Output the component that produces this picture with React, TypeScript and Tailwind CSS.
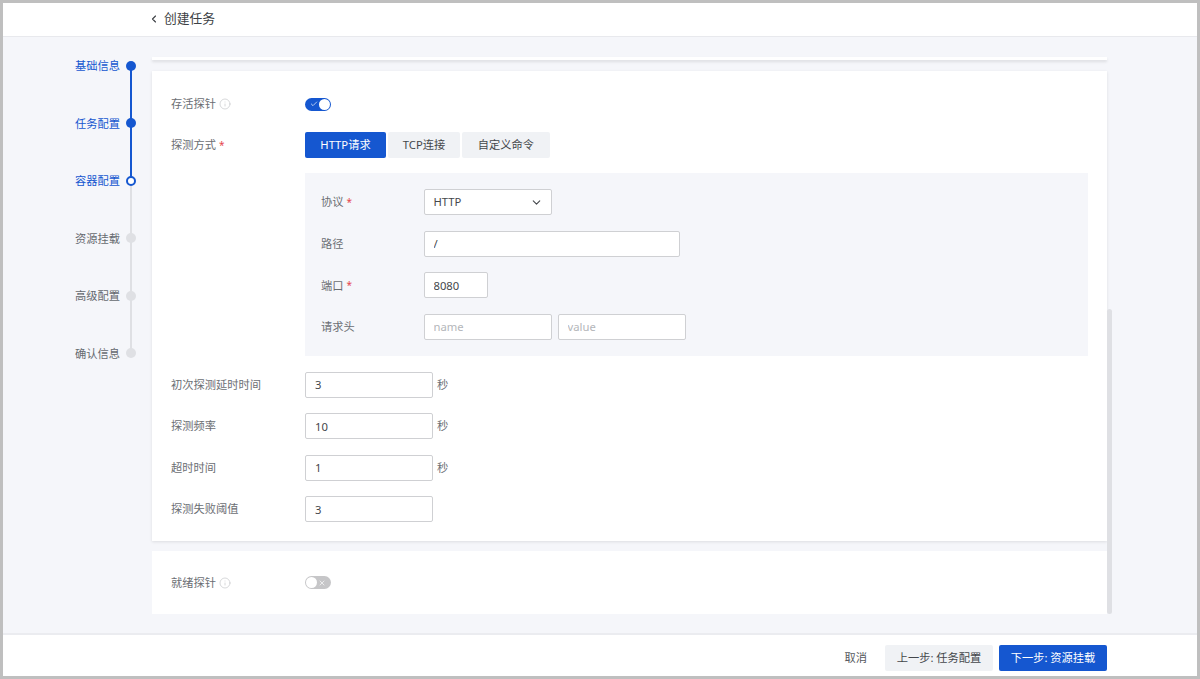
import { Check, ChevronDown, ChevronLeft, Info, X } from "lucide-react";

const steps = [
  { name: "基础信息", state: "done" },
  { name: "任务配置", state: "done" },
  { name: "容器配置", state: "current" },
  { name: "资源挂载", state: "todo" },
  { name: "高级配置", state: "todo" },
  { name: "确认信息", state: "todo" },
];

function Stepper() {
  return (
    <div className="w-[149px] shrink-0 pr-[16px]">
      {steps.map((step, i) => (
        <div key={step.name} className="relative flex h-[57.5px] items-center justify-end gap-[6px]">
          <span className={step.state === "todo" ? "text-[#666a70]" : "text-[#1557d0]"}>{step.name}</span>
          {i < steps.length - 1 && (
            <div
              className={`absolute right-[4px] top-1/2 h-full w-[2px] ${
                step.state === "done" ? "bg-[#1557d0]" : "bg-[#dfe0e4]"
              }`}
            />
          )}
          {step.state === "done" && <div className="relative h-[10px] w-[10px] rounded-full bg-[#1557d0]" />}
          {step.state === "current" && (
            <div className="relative h-[10px] w-[10px] rounded-full border-2 border-[#1557d0] bg-white" />
          )}
          {step.state === "todo" && <div className="relative h-[10px] w-[10px] rounded-full bg-[#dfe0e4]" />}
        </div>
      ))}
    </div>
  );
}

function Toggle({ on }: { on: boolean }) {
  if (on) {
    return (
      <div className="flex h-[13px] w-[26px] items-center justify-between rounded-full bg-[#1557d0] pl-[5px] pr-[1px]">
        <Check size={8} strokeWidth={2} className="text-white" />
        <div className="h-[11px] w-[11px] rounded-full bg-white" />
      </div>
    );
  }
  return (
    <div className="flex h-[13px] w-[26px] items-center justify-between rounded-full bg-[#c6c6c8] pl-[1px] pr-[5px]">
      <div className="h-[11px] w-[11px] rounded-full bg-white" />
      <X size={8} strokeWidth={2} className="text-white" />
    </div>
  );
}

function Label({ text, required, info }: { text: string; required?: boolean; info?: boolean }) {
  return (
    <div className="flex items-center text-[#6b6e73]">
      <span>{text}</span>
      {required && <span className="ml-[3px] text-[10px] text-[#e5484d]">*</span>}
      {info && <Info size={12} strokeWidth={1.5} className="ml-[3px] text-[#c9cbce]" />}
    </div>
  );
}

function Field({ value, placeholder, width }: { value?: string; placeholder?: string; width: string }) {
  return (
    <input
      readOnly
      value={value}
      placeholder={placeholder}
      className={`h-[26px] rounded-[2px] border border-[#cfd0d3] bg-white px-[9px] text-[#44474b] outline-none placeholder:text-[#b4b6ba] ${width}`}
    />
  );
}

function PanelRow({ label, required, children }: { label: string; required?: boolean; children: React.ReactNode }) {
  return (
    <div className="flex h-[26px] items-center">
      <div className="w-[102.5px]">
        <Label text={label} required={required} />
      </div>
      {children}
    </div>
  );
}

function NumberRow({ label, value, unit }: { label: string; value: string; unit?: boolean }) {
  return (
    <div className="flex h-[26px] items-center">
      <div className="w-[134px]">
        <Label text={label} />
      </div>
      <Field value={value} width="w-[128px]" />
      {unit && <span className="ml-[4px] text-[#6b6e73]">秒</span>}
    </div>
  );
}

export default function App() {
  return (
    <div
      className="flex h-[679px] w-[1200px] flex-col border-[3px] border-[#bfbfbf] bg-[#f5f6fa] text-[11.25px] leading-none"
      style={{ fontFamily: '"Noto Sans", "Noto Sans CJK SC", sans-serif' }}
    >
      <header className="flex h-[34px] shrink-0 items-center border-b border-[#e8e9ed] bg-white pb-[2px] pl-[145px] text-[12.75px] text-[#3c3f44]">
        <ChevronLeft size={12} strokeWidth={2.25} />
        <span className="ml-[4px]">创建任务</span>
      </header>

      <main className="relative flex min-h-0 flex-1">
        <Stepper />
        <div className="w-[955px]">
          <div className="mt-[20px] h-[3px] bg-white shadow-[0_2px_3px_rgba(0,0,0,0.1)]" />
          <section className="mt-[11px] flex h-[470px] flex-col bg-white pl-[19px] pr-[19px] pt-[20px] shadow-[0_1px_3px_rgba(0,0,0,0.1)]">
            <div className="flex h-[26px] items-center">
              <div className="w-[134px]">
                <Label text="存活探针" info />
              </div>
              <Toggle on />
            </div>

            <div className="mt-[15px] flex h-[26px] items-center">
              <div className="w-[134px]">
                <Label text="探测方式" required />
              </div>
              <div className="flex gap-[2px]">
                <button className="h-[26px] w-[81px] rounded-[2px] bg-[#1557d0] text-white">HTTP请求</button>
                <button className="h-[26px] w-[72px] rounded-[2px] bg-[#f0f2f5] text-[#44474b]">TCP连接</button>
                <button className="h-[26px] w-[88px] rounded-[2px] bg-[#f0f2f5] text-[#44474b]">自定义命令</button>
              </div>
            </div>

            <div className="ml-[134px] mt-[15px] flex h-[183px] flex-col gap-[15.6px] bg-[#f5f6fa] p-[16px]">
              <PanelRow label="协议" required>
                <div className="flex h-[26px] w-[128px] items-center justify-between rounded-[2px] border border-[#cfd0d3] bg-white pl-[9px] pr-[8px] text-[#44474b]">
                  <span>HTTP</span>
                  <ChevronDown size={13} strokeWidth={2} />
                </div>
              </PanelRow>
              <PanelRow label="路径">
                <Field value="/" width="w-[256px]" />
              </PanelRow>
              <PanelRow label="端口" required>
                <Field value="8080" width="w-[64px]" />
              </PanelRow>
              <PanelRow label="请求头">
                <div className="flex gap-[6px]">
                  <Field placeholder="name" width="w-[128px]" />
                  <Field placeholder="value" width="w-[128px]" />
                </div>
              </PanelRow>
            </div>

            <div className="mt-[15.5px] flex flex-col gap-[15.5px]">
              <NumberRow label="初次探测延时时间" value="3" unit />
              <NumberRow label="探测频率" value="10" unit />
              <NumberRow label="超时时间" value="1" unit />
              <NumberRow label="探测失败阈值" value="3" />
            </div>
          </section>

          <section className="mt-[10px] flex h-[63px] items-center bg-white pl-[19px]">
            <div className="w-[134px]">
              <Label text="就绪探针" info />
            </div>
            <Toggle on={false} />
          </section>
        </div>
        {/* scrollbar thumb */}
        <div className="absolute left-[1104px] top-[272px] h-[305px] w-[5px] rounded-full bg-[#dfe0e4]" />
      </main>

      <footer className="flex h-[43px] shrink-0 items-start justify-end border-t-2 border-[#ebecf0] bg-white pr-[90px] pt-[10px]">
        <span className="mr-[18px] flex h-[26px] items-center text-[#55585d]">取消</span>
        <button className="h-[26px] w-[108px] rounded-[2px] bg-[#f0f2f5] text-[#44474b]">上一步: 任务配置</button>
        <button className="ml-[6px] h-[26px] w-[108px] rounded-[2px] bg-[#1557d0] text-white">下一步: 资源挂载</button>
      </footer>
    </div>
  );
}
